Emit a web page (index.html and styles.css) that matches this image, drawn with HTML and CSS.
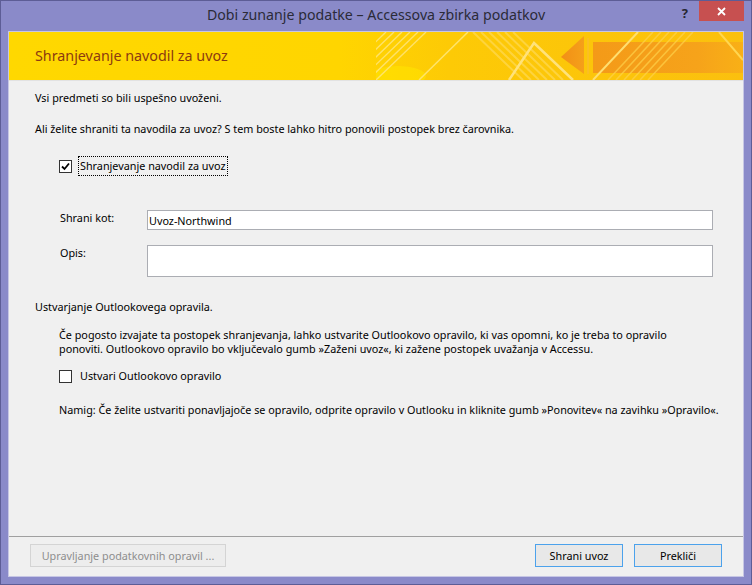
FILE: index.html
```html
<!DOCTYPE html>
<html lang="sl">
<head>
<meta charset="utf-8">
<title>Dobi zunanje podatke</title>
<link rel="stylesheet" href="styles.css">
</head>
<body>
<div class="window">
  <div class="titlebar">
    <div></div>
    <div class="title">Dobi zunanje podatke – Accessova zbirka podatkov</div>
    <div class="controls">
      <div class="help">?</div>
      <div class="close">
        <svg width="9" height="9" viewBox="0 0 9 9"><path d="M1 1 L8 8 M8 1 L1 8" stroke="#fff" stroke-width="1.8" fill="none"/></svg>
      </div>
    </div>
  </div>
  <div class="client">
    <div class="banner">
      <h1 class="banner-title">Shranjevanje navodil za uvoz</h1>
      <svg class="banner-art" width="367" height="48" viewBox="0 0 367 48">
        <defs>
          <linearGradient id="arrowG" x1="0" y1="0" x2="1" y2="0">
            <stop offset="0" stop-color="#f28f16"/>
            <stop offset="1" stop-color="#f5a01a"/>
          </linearGradient>
          <linearGradient id="shaftG" x1="0" y1="0" x2="1" y2="0">
            <stop offset="0" stop-color="#f49a18"/>
            <stop offset="0.7" stop-color="#f6a31a"/>
            <stop offset="1" stop-color="#f9b016"/>
          </linearGradient>
        </defs>
        <ellipse cx="22" cy="44" rx="28" ry="10" fill="#ffe500" opacity="0.55"/>
        <g stroke="#ffe88a" stroke-width="1.4" opacity="0.75">
          <line x1="-40" y1="48" x2="10" y2="0"/>
          <line x1="-32" y1="48" x2="18" y2="0"/>
          <line x1="-24" y1="48" x2="26" y2="0"/>
          <line x1="-16" y1="48" x2="34" y2="0"/>
          <line x1="-8" y1="48" x2="42" y2="0"/>
          <line x1="0" y1="48" x2="50" y2="0"/>
        </g>
        <line x1="43" y1="48" x2="92" y2="0" stroke="#ffe46a" stroke-width="1.5"/>
        <g stroke="#ffdc62" stroke-width="2" opacity="0.6">
          <line x1="97" y1="0" x2="147" y2="48"/>
          <line x1="105" y1="0" x2="155" y2="48"/>
          <line x1="113" y1="0" x2="163" y2="48"/>
          <line x1="121" y1="0" x2="171" y2="48"/>
          <line x1="129" y1="0" x2="179" y2="48"/>
          <line x1="137" y1="0" x2="187" y2="48"/>
        </g>
        <polygon points="185,25 208,4 208,42" fill="url(#arrowG)"/>
        <rect x="217" y="10" width="150" height="31" fill="url(#shaftG)"/>
        <line x1="212" y1="6" x2="212" y2="42" stroke="#fbbf22" stroke-width="2"/>
        <polyline points="133,48 158,11 197,48" fill="none" stroke="#ffe27a" stroke-width="2.5"/>
        <line x1="217" y1="48" x2="262" y2="0" stroke="#ffdf70" stroke-width="2"/>
        <g stroke="#ffd24a" stroke-width="1.6" opacity="0.7">
          <line x1="232" y1="48" x2="277" y2="0"/>
          <line x1="240" y1="48" x2="285" y2="0"/>
          <line x1="248" y1="48" x2="293" y2="0"/>
          <line x1="256" y1="48" x2="301" y2="0"/>
          <line x1="264" y1="48" x2="309" y2="0"/>
          <line x1="272" y1="48" x2="317" y2="0"/>
        </g>
        <line x1="343" y1="0" x2="367" y2="28" stroke="#ffd650" stroke-width="2"/>
      </svg>
    </div>
    <div class="content">
      <p class="msg msg-first">Vsi predmeti so bili uspešno uvoženi.</p>
      <p class="msg msg-question">Ali želite shraniti ta navodila za uvoz? S tem boste lahko hitro ponovili postopek brez čarovnika.</p>
      <div class="check-row check-save">
        <span class="cb">
          <svg width="11" height="11" viewBox="0 0 11 11"><path d="M2 5.5 L4.5 8 L9 2.5" fill="none" stroke="#000" stroke-width="1.8"/></svg>
        </span>
        <span class="cb-label focused">Shranjevanje navodil za uvoz</span>
      </div>
      <div class="form">
        <label class="field-label">Shrani kot:</label>
        <input class="field-input" type="text" value="Uvoz-Northwind">
        <label class="field-label">Opis:</label>
        <textarea class="field-area"></textarea>
      </div>
      <p class="msg msg-section">Ustvarjanje Outlookovega opravila.</p>
      <p class="msg indent para">Če pogosto izvajate ta postopek shranjevanja, lahko ustvarite Outlookovo opravilo, ki vas opomni, ko je treba to opravilo<br>ponoviti. Outlookovo opravilo bo vključevalo gumb »Zaženi uvoz«, ki zažene postopek uvažanja v Accessu.</p>
      <div class="check-row check-outlook">
        <span class="cb"></span>
        <span class="cb-label">Ustvari Outlookovo opravilo</span>
      </div>
      <p class="msg indent hint">Namig: Če želite ustvariti ponavljajoče se opravilo, odprite opravilo v Outlooku in kliknite gumb »Ponovitev« na zavihku »Opravilo«.</p>
    </div>
    <div class="footer">
      <button class="btn btn-disabled" disabled>Upravljanje podatkovnih opravil ...</button>
      <div class="footer-right">
        <button class="btn btn-primary">Shrani uvoz</button>
        <button class="btn btn-primary">Prekliči</button>
      </div>
    </div>
  </div>
</div>
</body>
</html>
```
FILE: styles.css
```css
html, body {
  margin: 0;
  padding: 0;
}

body {
  width: 752px;
  height: 585px;
  font-family: "Noto Sans", "Open Sans", sans-serif;
  font-size: 10.8px;
  color: #000;
}

.window {
  box-sizing: border-box;
  width: 752px;
  height: 585px;
  background: #8a8ac9;
  border: 1px solid #5d5d96;
  display: flex;
  flex-direction: column;
}

.titlebar {
  height: 30px;
  padding: 0 7px;
  display: grid;
  grid-template-columns: 1fr auto 1fr;
}

.title {
  font-size: 14.2px;
  line-height: 28px;
  color: #2b2b38;
  white-space: nowrap;
}

.controls {
  display: flex;
  justify-content: flex-end;
  align-items: flex-start;
}

.help {
  font-size: 13px;
  font-weight: bold;
  line-height: 14px;
  margin-top: 5px;
  margin-right: 11px;
  color: #262630;
}

.close {
  width: 45px;
  height: 20px;
  background: #c75050;
  display: flex;
  align-items: center;
  justify-content: center;
}

.client {
  flex: 1;
  margin: 0 7px 7px;
  border: 1px solid #c6c6e4;
  background: #f0f0f0;
  display: flex;
  flex-direction: column;
}

.banner {
  position: relative;
  height: 48px;
  border-bottom: 1px solid #e2e2e2;
  background: linear-gradient(90deg, #ffd800 0%, #ffd500 45%, #fdca06 60%, #fbc00e 100%);
  overflow: hidden;
}

.banner-title {
  margin: 0;
  padding-left: 26px;
  font-size: 14.3px;
  font-weight: normal;
  line-height: 48px;
  color: #8c3a10;
}

.banner-art {
  position: absolute;
  right: 0;
  top: 0;
}

.content {
  flex: 1;
  padding-left: 26px;
}

.msg {
  margin: 0;
  line-height: 16px;
}

.msg-first { margin-top: 9px; }
.msg-question { margin-top: 15px; }
.msg-section { margin-top: 22px; }

.indent { padding-left: 24px; }

.para {
  margin-top: 13px;
  line-height: 14px;
}

.hint { margin-top: 18px; }

.check-row {
  display: flex;
  align-items: center;
  height: 16px;
  padding-left: 24px;
}

.check-save { margin-top: 21px; }
.check-outlook { margin-top: 12px; }

.cb {
  box-sizing: border-box;
  width: 13px;
  height: 13px;
  border: 1px solid #333;
  background: #fff;
  display: flex;
  align-items: center;
  justify-content: center;
}

.cb-label {
  margin-left: 6px;
  padding: 1px;
  border: 1px solid transparent;
  line-height: 16px;
}

.cb-label.focused {
  border: 1px dotted #000;
}

.form {
  margin-top: 36px;
  margin-left: 25px;
  display: grid;
  grid-template-columns: 87px 566px;
  row-gap: 15px;
  align-items: start;
}

.field-label {
  line-height: 16px;
}

.field-input,
.field-area {
  box-sizing: border-box;
  width: 566px;
  margin: 0;
  border: 1px solid #abadb3;
  background: #fff;
  font-family: inherit;
  font-size: 10.8px;
  color: #000;
  outline: none;
}

.field-input {
  height: 20px;
  padding: 0 1px;
}

.field-area {
  height: 32px;
  padding: 1px;
  resize: none;
  display: block;
}

.footer {
  border-top: 1px solid #a0a0a0;
  padding: 7px 21px 9px 21px;
  display: flex;
  justify-content: space-between;
}

.footer-right {
  display: flex;
  gap: 11px;
}

.btn {
  box-sizing: border-box;
  height: 23px;
  margin: 0;
  padding: 0;
  font-family: inherit;
  font-size: 10.8px;
  line-height: 21px;
  text-align: center;
}

.btn-disabled {
  width: 196px;
  border: 1px solid #d4d4d4;
  background: #ededed;
  color: #8d8d8d;
}

.btn-primary {
  width: 88px;
  border: 1px solid #4ca2ec;
  background: #e8e8e8;
  color: #000;
}
```
